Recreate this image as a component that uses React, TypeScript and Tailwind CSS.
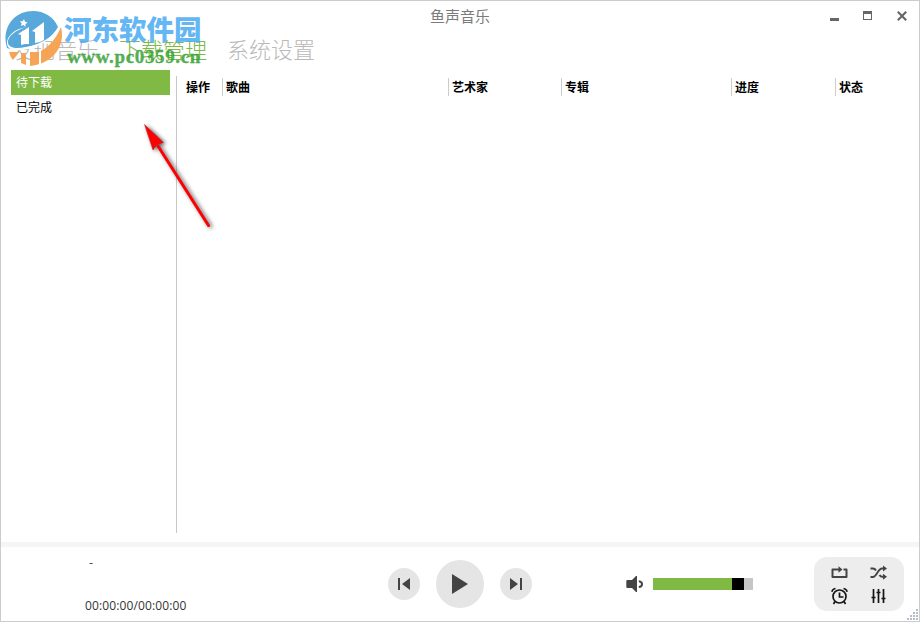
const tabs = [
    { label: "发现音乐", active: false },
    { label: "下载管理", active: true },
    { label: "系统设置", active: false },
]

const folders = [
    { label: "待下载", active: true },
    { label: "已完成", active: false },
]

const columns = [
    { label: "操作", className: "w-[41px] pl-[5px]" },
    { label: "歌曲", className: "w-[226px] border-l pl-[3px]" },
    { label: "艺术家", className: "w-[113px] border-l pl-[3px]" },
    { label: "专辑", className: "w-[170px] border-l pl-[3px]" },
    { label: "进度", className: "w-[104px] border-l pl-[3px]" },
    { label: "状态", className: "w-[80px] border-l pl-[3px]" },
]

function TitleBar() {
    return (
        <header className="relative flex h-[31px] shrink-0 items-start justify-center">
            <h1 className="pt-[5px] text-[15px] leading-5 text-[#7b7b7b]">鱼声音乐</h1>
            <div className="absolute right-[12px] top-[10px] flex items-start text-[#666]">
                <button className="mr-6 mt-[7px] h-[3px] w-[9px] bg-[#666]" aria-label="最小化" />
                <button
                    className="mr-[25px] h-[9px] w-[9px] border border-t-[3px] border-[#666]"
                    aria-label="最大化"
                />
                <button aria-label="关闭">
                    <svg className="block" width="10" height="10" viewBox="0 0 10 10">
                        <path d="M.8.8 9.2 9.2M9.2.8.8 9.2" stroke="currentColor" strokeWidth="2.1" />
                    </svg>
                </button>
            </div>
        </header>
    )
}

function Watermark() {
    return (
        <div className="pointer-events-none absolute left-[2px] top-[7px] flex">
            <svg width="61" height="60" viewBox="3 8 61 60" className="shrink-0">
                <path
                    d="M7 48C1 28 14 11 33 11c11 0 21 6 25 16-5 9-14 16-26 19C21 49 12 50 7 48Z"
                    fill="#4fa3d9"
                    opacity=".95"
                />
                <path
                    d="M27 27C15 30 7 37 8 43c1 5 8 6 18 4 16-3 28-11 34-20-7 11-19 19-31 22-14 3-22 1-22-6 0-7 7-14 20-16Z"
                    fill="#fff"
                />
                <path d="M21 45V35l-3-1 11-7v17h-4l-4 1ZM35 43V32l-3-1 12-9v18l-4 2-5 1Z" fill="#fff" />
                <path
                    d="M61 27c5 20-9 37-31 39V52h9c10-5 17-13 22-25ZM26 53v12l-5-2V53ZM9 52h10l-6 8c-2-2-3-5-4-8Z"
                    fill="#f5a04d"
                    opacity=".95"
                />
                <path d="M39 51h2v14l-2 .500Z" fill="#fff" />
                <path d="m24 19 1 2.700 2.700.800-2.200 1.500.100 2.700-2.200-1.600-2.500.900.800-2.600-1.700-2.100 2.700-.100Z" fill="#fff" />
            </svg>
            <div className="pt-[5px]">
                <div className="whitespace-nowrap text-[27.5px] font-black leading-[30px] text-[#4fadf2]/90">
                    河东软件园
                </div>
                <div className="ml-[3px] mt-[4px] whitespace-nowrap font-['Liberation_Serif',serif] text-[19px] font-bold leading-5 tracking-[.65px] text-[#36a236]/85 [-webkit-text-stroke:.3px_#36a236]">
                    www.pc0359.cn
                </div>
            </div>
        </div>
    )
}

function Pointer() {
    return (
        <svg className="pointer-events-none absolute left-[134px] top-[114px]" width="90" height="128" viewBox="135 115 90 128">
            <g className="[filter:drop-shadow(2px_1px_2px_#555)]">
                <path d="M158 146 208.500 225.500" stroke="#f00" strokeWidth="3" strokeLinecap="round" />
                <path d="M144.500 124.500 163.500 142.500 157 144.500 153 150Z" fill="#f00" stroke="#b22" strokeWidth=".5" />
            </g>
        </svg>
    )
}

function PlaybackButtons() {
    return (
        <div className="flex items-center gap-4 text-[#444]">
            <button className="grid size-8 place-items-center rounded-full bg-[#e5e5e5]" aria-label="上一首">
                <svg width="32" height="32" viewBox="0 0 32 32" fill="currentColor">
                    <path d="M10 10h2v12h-2ZM22 10v12l-8-6Z" />
                </svg>
            </button>
            <button className="grid size-12 place-items-center rounded-full bg-[#e5e5e5]" aria-label="播放">
                <svg width="48" height="48" viewBox="0 0 48 48" fill="currentColor">
                    <path d="M16 14v20l16-10Z" />
                </svg>
            </button>
            <button className="grid size-8 place-items-center rounded-full bg-[#e5e5e5]" aria-label="下一首">
                <svg width="32" height="32" viewBox="0 0 32 32" fill="currentColor">
                    <path d="M20 10h2v12h-2ZM10 10v12l8-6Z" />
                </svg>
            </button>
        </div>
    )
}

function Volume() {
    return (
        <div className="flex items-center">
            <svg width="18" height="18" viewBox="0 0 18 18" fill="#444">
                <path d="M1.500 5H6l4-4h1v16h-1l-4-4H1.500Q.300 13 .300 12V6Q.300 5 1.500 5Z" />
                <path d="M12.800 6.300q3.200.300 3.200 2.900t-3.200 2.900" fill="none" stroke="#444" strokeWidth="2" />
            </svg>
            <div className="ml-[9px] flex h-3 w-[100px] bg-[#c6c6c6]">
                <span className="w-[79px] bg-[#80b944]" />
                <span className="w-3 bg-black" />
            </div>
        </div>
    )
}

function ToolPanel() {
    return (
        <div className="grid h-[54px] w-[90px] grid-cols-2 place-items-center rounded-[13px] bg-[#ededed] py-1 pl-[6px] pr-[6px]">
            <svg width="18" height="18" viewBox="0 0 18 18" fill="none" stroke="#444" strokeWidth="2" strokeLinejoin="round">
                <path d="M8 5.500H1.500V13H15.500V5.500h-3" />
                <path d="m7.500 2.300 4 3.200-4 3.200Z" fill="#444" stroke="none" />
            </svg>
            <svg width="18" height="18" viewBox="0 0 18 18" fill="none" stroke="#444" strokeWidth="1.900">
                <path d="M.500 13h2.500c3.500 0 5-8.500 9-8.500h2.500M.500 4.500h2.500q1.800 0 3 2M9.500 11q1 1.800 3 1.800h2" />
                <path d="m13 1.500 4 3-4 3ZM13 9.800l4 3-4 3Z" fill="#444" stroke="none" />
            </svg>
            <svg width="18" height="18" viewBox="0 0 18 18" fill="none" stroke="#151515" strokeWidth="1.700">
                <circle cx="8.500" cy="9.500" r="6.500" />
                <path d="M8.500 5.500v4.500h4M4 14.500 2.500 17M13 14.500 14.500 17M.800 4.800Q1.500 2 4.500 1.500M16.200 4.800Q15.500 2 12.500 1.500" />
            </svg>
            <svg width="18" height="18" viewBox="0 0 18 18" fill="none" stroke="#151515" strokeWidth="1.700">
                <path d="M3.500 2v14M8.500 2v14M13.500 2v14M1.500 10.500h4M6.500 5.500h4M11.500 11.500h4" />
            </svg>
        </div>
    )
}

function ResizeGrip() {
    return (
        <svg className="absolute bottom-0 right-0" width="12" height="12" viewBox="0 0 12 12" fill="#b3bdcb">
            <path d="M9 0h2v2H9ZM6 3h2v2H6ZM9 3h2v2H9ZM3 6h2v2H3ZM6 6h2v2H6ZM9 6h2v2H9ZM0 9h2v2H0ZM3 9h2v2H3ZM6 9h2v2H6ZM9 9h2v2H9Z" />
        </svg>
    )
}

export default function App() {
    return (
        <div className="relative flex h-[622px] w-[920px] flex-col overflow-hidden border border-[#ccc] bg-white font-['Noto_Sans_CJK_SC',sans-serif] text-xs text-black">
            <TitleBar />

            <nav className="flex h-[38px] shrink-0 gap-5 pl-[10px]">
                {tabs.map((tab) => (
                    <button
                        key={tab.label}
                        className={`h-8 text-[22px] font-light leading-8 ${tab.active ? "text-[#80b944]" : "text-[#b9b9b9]"}`}
                    >
                        {tab.label}
                    </button>
                ))}
            </nav>

            <main className="flex h-[463px] shrink-0">
                <aside className="w-[169px] shrink-0 pl-[10px]">
                    {folders.map((folder) => (
                        <div
                            key={folder.label}
                            className={`h-[25px] pl-[5px] leading-[23px] ${folder.active ? "bg-[#80b944] text-white" : ""}`}
                        >
                            {folder.label}
                        </div>
                    ))}
                </aside>
                <section className="ml-[6px] mt-[6px] flex-1 border-l border-[#c8c8c8] pl-[4px] pt-[2px]">
                    <div className="flex">
                        {columns.map((column) => (
                            <div
                                key={column.label}
                                className={`h-[18px] shrink-0 border-[#ccc] font-bold leading-[18px] ${column.className}`}
                            >
                                {column.label}
                            </div>
                        ))}
                    </div>
                </section>
            </main>

            <div className="mt-[9px] h-[5px] shrink-0 bg-[#f5f5f5]" />

            <footer className="flex h-[74px] shrink-0 items-center">
                <div className="flex h-full w-[387px] flex-col justify-between pb-[5px] pl-[84px] pt-[5px] text-[#333]">
                    <span className="pl-1 leading-5">-</span>
                    <span className="font-['Open_Sans',sans-serif] leading-5 tracking-[.12px]">00:00:00/00:00:00</span>
                </div>
                <PlaybackButtons />
                <div className="ml-[94px]">
                    <Volume />
                </div>
                <div className="ml-[61px]">
                    <ToolPanel />
                </div>
            </footer>

            <Watermark />
            <Pointer />
            <ResizeGrip />
        </div>
    )
}
